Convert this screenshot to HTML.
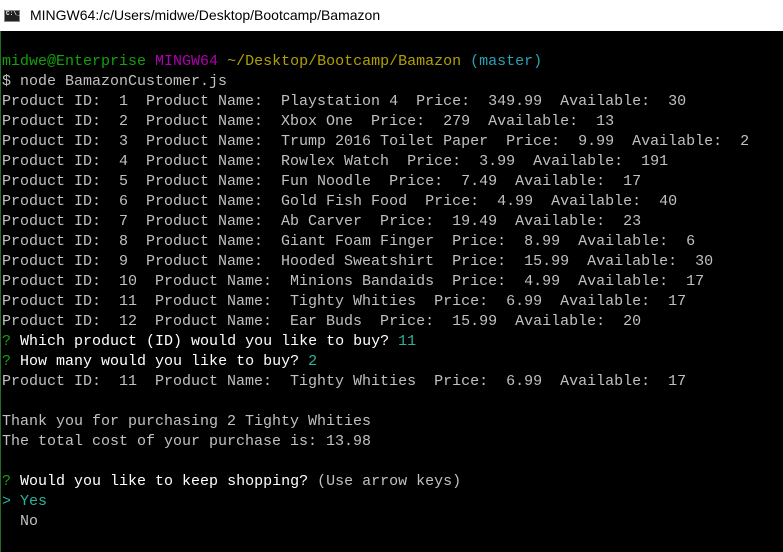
<!DOCTYPE html>
<html><head><style>
body{margin:0;width:783px;height:552px;overflow:hidden;background:#000;}
#t{position:absolute;left:0;top:0;width:783px;height:31px;background:#fff;}
#t span{position:absolute;left:30px;top:7px;font:14px "Liberation Sans",sans-serif;color:#000;}
#ic{position:absolute;left:4px;top:10px;width:16px;height:12px;background:#222;border:1px solid #888;box-sizing:border-box;}
#ic:after{content:"C:\\_";position:absolute;left:1px;top:-1px;font:bold 6px "Liberation Mono",monospace;color:#fff;}
#term{position:absolute;left:2px;top:52px;font:15px/20px "Liberation Mono",monospace;color:#c0c0c0;white-space:pre;}
#lb{position:absolute;left:0;top:31px;width:1px;height:521px;background:#2a6a2a;}
.g{color:#13a10e}.m{color:#b000b0}.y{color:#b0a000}.c{color:#2aa1b3}.w{color:#fff}.a{color:#30b0a0}
</style></head><body>
<div id="t"><div id="ic"></div><span>MINGW64:/c/Users/midwe/Desktop/Bootcamp/Bamazon</span></div>
<div id="lb"></div>
<div id="term"><span class="g">midwe@Enterprise</span> <span class="m">MINGW64</span> <span class="y">~/Desktop/Bootcamp/Bamazon</span> <span class="c">(master)</span>
$ node BamazonCustomer.js
Product ID:  1  Product Name:  Playstation 4  Price:  349.99  Available:  30
Product ID:  2  Product Name:  Xbox One  Price:  279  Available:  13
Product ID:  3  Product Name:  Trump 2016 Toilet Paper  Price:  9.99  Available:  2
Product ID:  4  Product Name:  Rowlex Watch  Price:  3.99  Available:  191
Product ID:  5  Product Name:  Fun Noodle  Price:  7.49  Available:  17
Product ID:  6  Product Name:  Gold Fish Food  Price:  4.99  Available:  40
Product ID:  7  Product Name:  Ab Carver  Price:  19.49  Available:  23
Product ID:  8  Product Name:  Giant Foam Finger  Price:  8.99  Available:  6
Product ID:  9  Product Name:  Hooded Sweatshirt  Price:  15.99  Available:  30
Product ID:  10  Product Name:  Minions Bandaids  Price:  4.99  Available:  17
Product ID:  11  Product Name:  Tighty Whities  Price:  6.99  Available:  17
Product ID:  12  Product Name:  Ear Buds  Price:  15.99  Available:  20
<span class="g">?</span> <span class="w">Which product (ID) would you like to buy?</span> <span class="a">11</span>
<span class="g">?</span> <span class="w">How many would you like to buy?</span> <span class="a">2</span>
Product ID:  11  Product Name:  Tighty Whities  Price:  6.99  Available:  17

Thank you for purchasing 2 Tighty Whities
The total cost of your purchase is: 13.98

<span class="g">?</span> <span class="w">Would you like to keep shopping?</span> (Use arrow keys)
<span class="a">&gt; Yes</span>
  No</div>
</body></html>
